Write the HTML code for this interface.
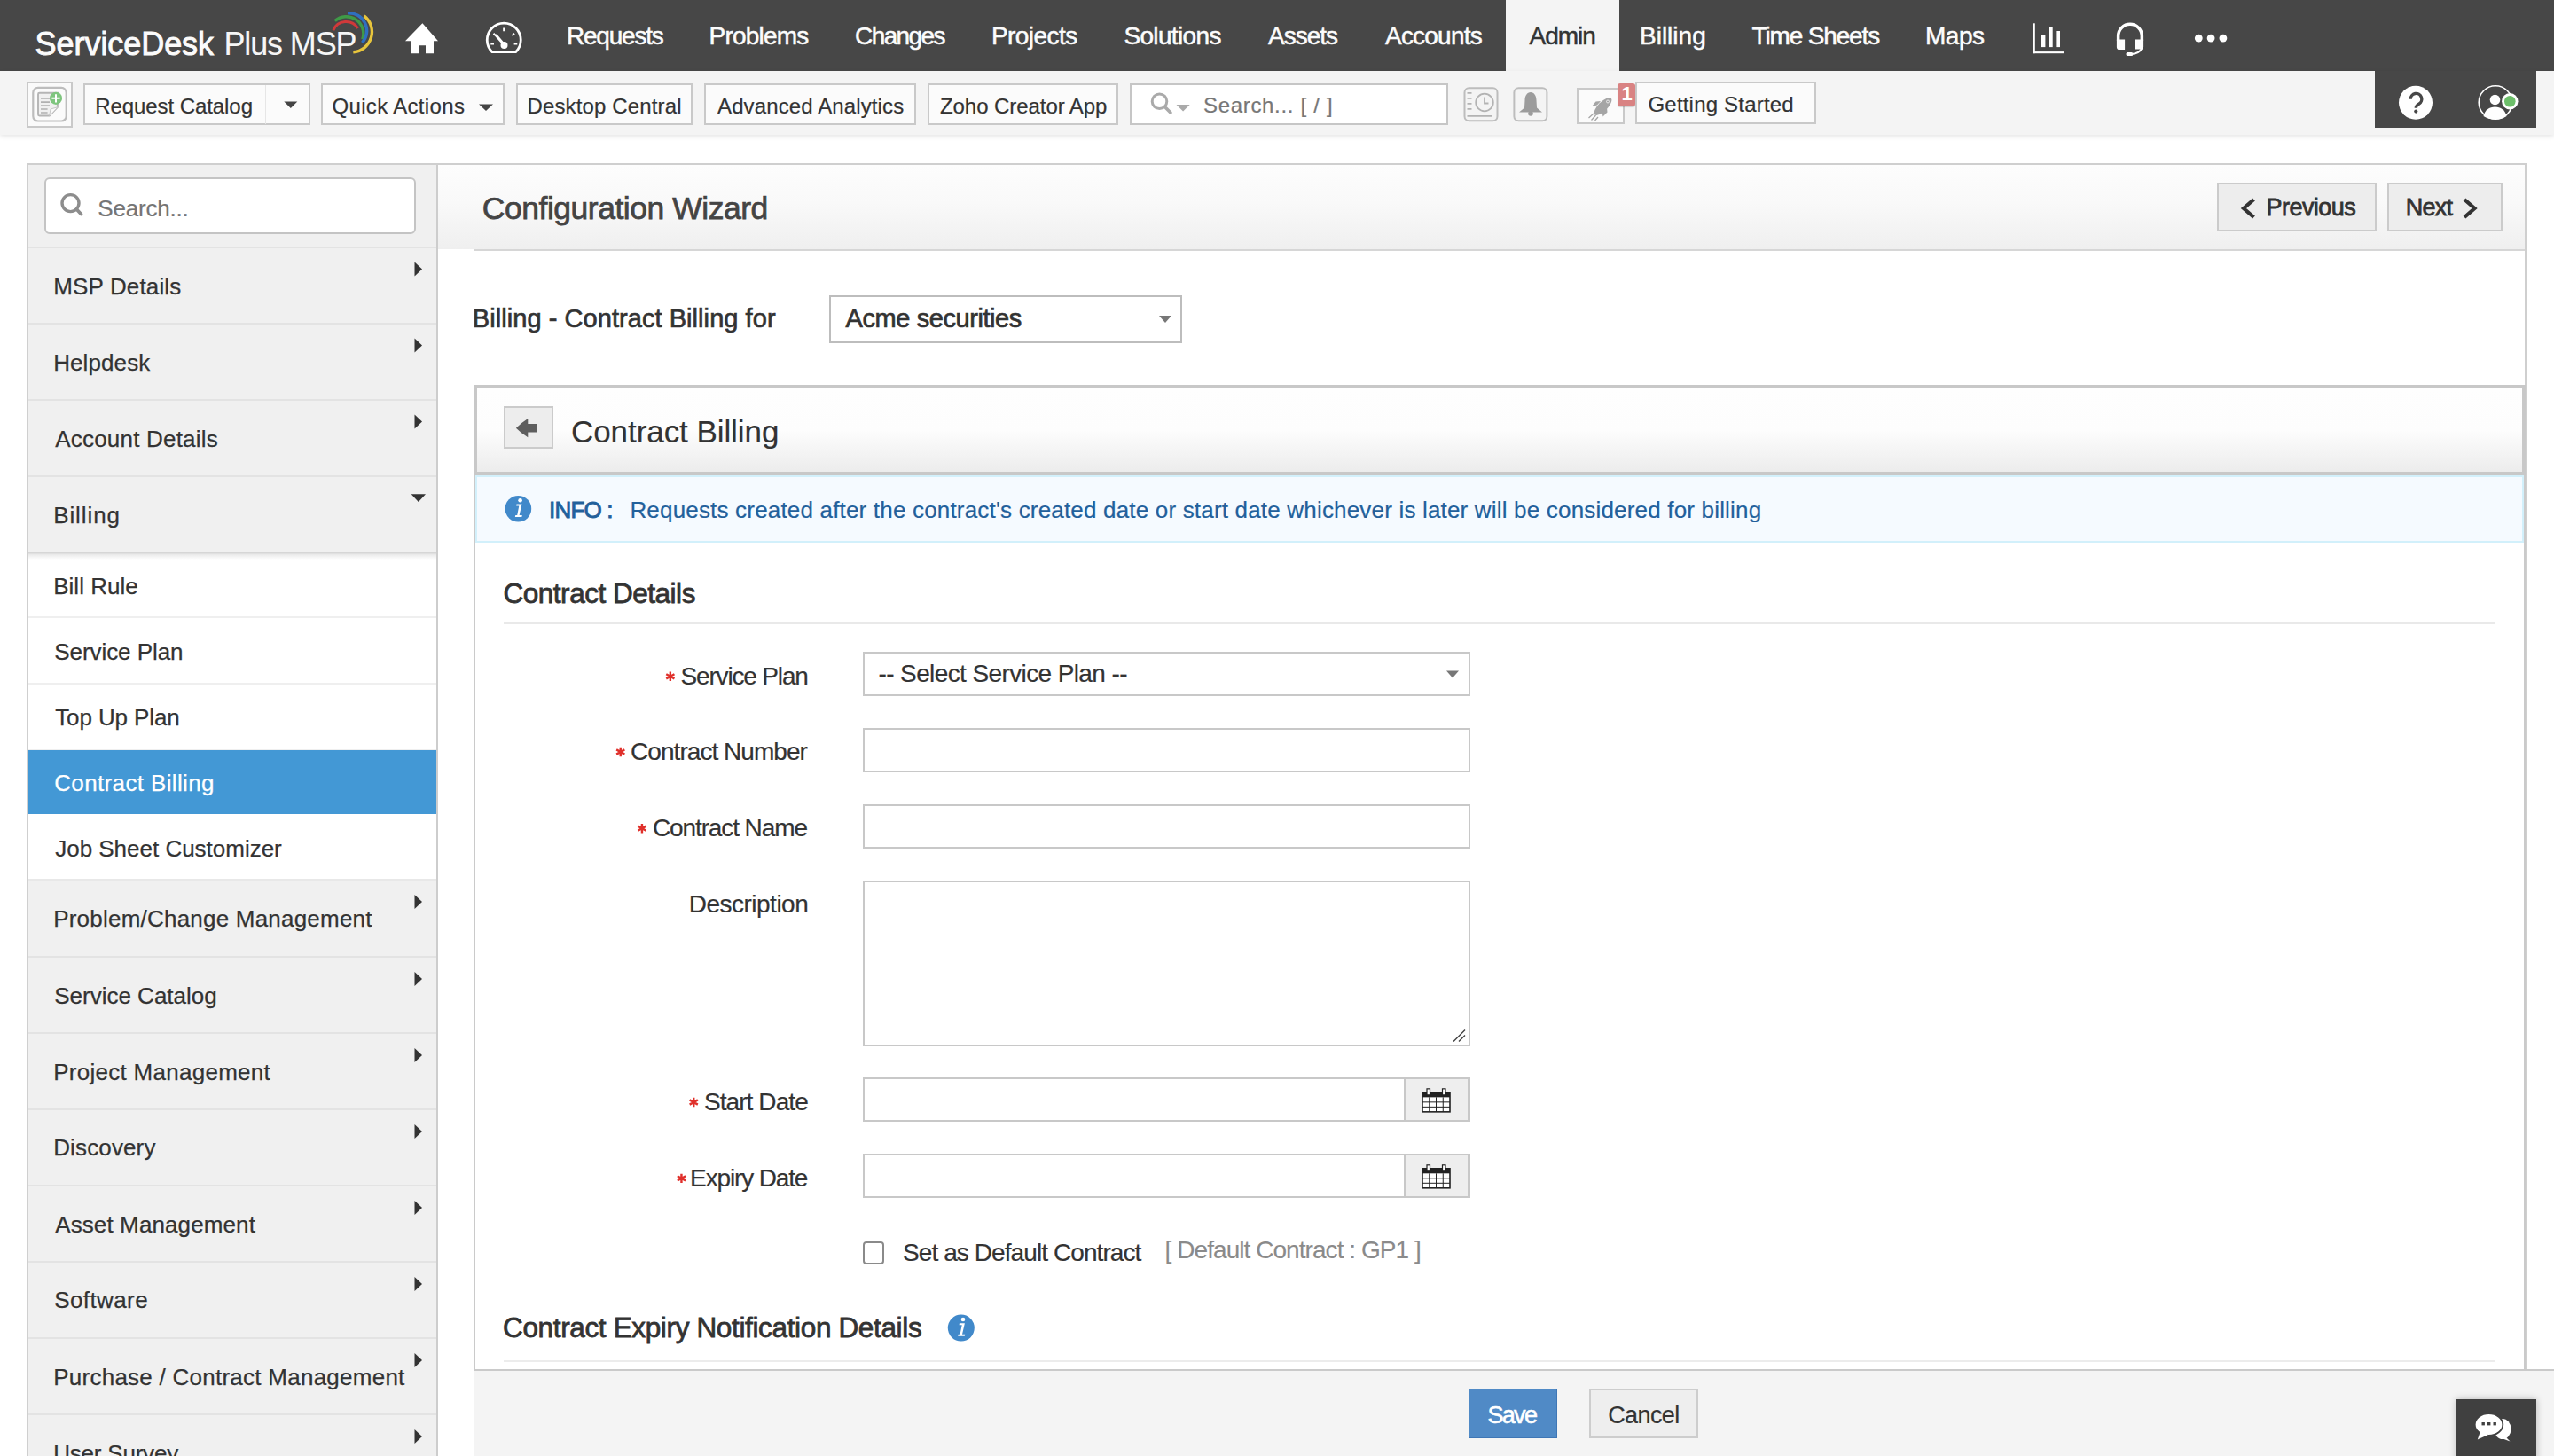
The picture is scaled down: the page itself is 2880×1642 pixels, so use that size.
<!DOCTYPE html>
<html><head><meta charset="utf-8"><title>ServiceDesk Plus MSP - Contract Billing</title>
<style>
html,body{margin:0;padding:0;}
body{width:2880px;height:1642px;position:relative;overflow:hidden;background:#fff;font-family:'Liberation Sans', sans-serif;}
.t{position:absolute;white-space:nowrap;}
svg{position:absolute;overflow:visible;}
</style></head><body>
<div style="position:absolute;left:0px;top:0px;width:2880px;height:80px;background:#474747"></div>
<div style="position:absolute;left:1698px;top:0px;width:128px;height:80px;background:#f4f4f4"></div>
<svg style="left:0;top:0" width="2880" height="80" viewBox="0 0 2880 80">
<g fill="none" stroke-width="3.2" stroke-linecap="butt">
<path d="M375.8,34.1 A15.56,15.56 0 0 1 403.5,32" stroke="#d0393a" stroke-width="3"/>
<path d="M377.6,23.6 A19.36,19.36 0 0 1 408.8,44.3" stroke="#3f9a47" stroke-width="3.4"/>
<path d="M392,14.8 A19.97,19.97 0 0 1 408.4,48.2" stroke="#2f6fc0" stroke-width="3.4"/>
<path d="M410.6,17.9 A22.9,22.9 0 0 1 398.3,58.8" stroke="#e8c53c" stroke-width="3.4"/>
</g>
<g fill="#fff">
<path d="M476.4,26.2 L494,46.2 L489,46.2 L489,60.3 L480,60.3 L480,51.3 L472,51.3 L472,60.3 L463,60.3 L463,46.2 L457,46.2 Z"/>
</g>
<g fill="none" stroke="#fff">
<path d="M555,58.7 A19,19 0 1 1 581.5,58.7 Z" stroke-width="2.8" stroke-linejoin="round"/>
<path d="M568.2,31.5 V35.2 M553.3,49.5 H557 M579.6,49.5 H583.3 M556.5,37.8 L559,40.3 M580,37.8 L577.5,40.3" stroke-width="2"/>
<path d="M559.5,40 L568.5,50.5" stroke-width="3" stroke-linecap="round"/>
</g>
<circle cx="568.5" cy="51" r="4" fill="#fff"/>
<!-- bar chart -->
<g fill="#fff">
<rect x="2292.6" y="26.3" width="2.2" height="33.9"/>
<rect x="2292.6" y="58.1" width="35.1" height="2.1"/>
<rect x="2301.9" y="39.3" width="4.5" height="13.8"/>
<rect x="2310.2" y="30.6" width="4.5" height="22.5"/>
<rect x="2318.4" y="35" width="4.6" height="18.1"/>
</g>
<!-- headset -->
<path d="M2388.65,46 V40.6 A13.35,13.35 0 0 1 2415.35,40.6 V46" fill="none" stroke="#fff" stroke-width="3.5"/>
<path d="M2386.9,44.5 H2396.1 V56 H2390 A3.1,3.1 0 0 1 2386.9,52.9 Z" fill="#fff"/>
<path d="M2408,44.5 H2417.1 V52.4 A3.1,3.1 0 0 1 2414,55.5 H2408 Z" fill="#fff"/>
<path d="M2415.5,54 Q2412.5,60.3 2404,61" fill="none" stroke="#fff" stroke-width="1.9"/>
<rect x="2397.6" y="59" width="7.6" height="4" rx="1.6" fill="#fff"/>
<!-- dots -->
<g fill="#fff"><circle cx="2479.3" cy="43.1" r="4.4"/><circle cx="2493.1" cy="43.1" r="4.4"/><circle cx="2506.9" cy="43.1" r="4.4"/></g>
</svg>
<div style="position:absolute;left:0px;top:80px;width:2880px;height:72px;background:#f4f4f4;box-shadow:0 2px 5px rgba(0,0,0,0.10)"></div>
<div style="position:absolute;left:2678px;top:80px;width:182px;height:63.599999999999994px;background:#474747"></div>
<div style="position:absolute;left:30.4px;top:92.3px;width:51.199999999999996px;height:51.500000000000014px;box-sizing:border-box;border:2px solid #c9c9c9;background:#fafafa"></div>
<svg style="left:0;top:0" width="2880" height="160" viewBox="0 0 2880 160">
<defs><filter id="bl" x="-20%" y="-20%" width="140%" height="140%"><feGaussianBlur stdDeviation="0.7"/></filter></defs>
<rect x="37.3" y="98.9" width="37.4" height="37.6" rx="5.5" fill="#fbfbfb" stroke="#bdbdbd" stroke-width="2.2" filter="url(#bl)"/>
<path d="M44.5,104.8 H64.9 V120.8 L55.7,130.5 H44.5 Q43,130.5 43,129 V106.3 Q43,104.8 44.5,104.8 Z" fill="#f0f0f0" stroke="#b5b5b5" stroke-width="1.9"/>
<path d="M55.7,130.5 L57,123 L64.9,120.8" fill="#fafafa" stroke="#c8c8c8" stroke-width="1"/>
<g stroke="#b0b0b0" stroke-width="1.6"><path d="M46,111 H56 M46,115.1 H56 M46,119.1 H56 M46,123 H53.6 M46,127 H53.6"/></g>
<circle cx="63" cy="110.8" r="7.1" fill="#7ec57e"/>
<path d="M63,106.2 V115.4 M58.4,110.8 H67.6" stroke="#fff" stroke-width="2"/>
<!-- history -->
<rect x="1651.5" y="99.3" width="37" height="37" rx="5" fill="none" stroke="#bdbdbd" stroke-width="2" filter="url(#bl)"/>
<circle cx="1674" cy="115.5" r="9.8" fill="none" stroke="#b3b3b3" stroke-width="1.8"/>
<path d="M1674,109.5 V116.5 H1678.5" fill="none" stroke="#b3b3b3" stroke-width="1.8"/>
<path d="M1654.5,104.8 H1659.5 M1654.5,110.8 H1659.5 M1654.5,116.8 H1659.5 M1654.5,122.8 H1659.5 M1654.5,130.8 H1682" stroke="#b3b3b3" stroke-width="1.8"/>
<!-- bell -->
<rect x="1707.4" y="99.3" width="37" height="37" rx="5" fill="none" stroke="#bdbdbd" stroke-width="2" filter="url(#bl)"/>
<path d="M1726,104 C1730,104 1732.5,108 1732.5,113 L1733,121.5 L1739,126.5 H1713 L1719,121.5 L1719.5,113 C1719.5,108 1722,104 1726,104 Z" fill="#9c9c9c"/>
<circle cx="1726" cy="128" r="2.8" fill="#9c9c9c"/>
</svg>
<div style="position:absolute;left:94.3px;top:94.3px;width:255.3px;height:47.2px;box-sizing:border-box;border:2px solid #c9c9c9;background:#fbfbfb"></div>
<div style="position:absolute;left:298.6px;top:96px;width:1.3999999999999773px;height:44px;background:#e6e6e6"></div>
<div style="position:absolute;left:362px;top:94.3px;width:207px;height:47.2px;box-sizing:border-box;border:2px solid #c9c9c9;background:#fbfbfb"></div>
<div style="position:absolute;left:582px;top:94.3px;width:199px;height:47.2px;box-sizing:border-box;border:2px solid #c9c9c9;background:#fbfbfb"></div>
<div style="position:absolute;left:794px;top:94.3px;width:239px;height:47.2px;box-sizing:border-box;border:2px solid #c9c9c9;background:#fbfbfb"></div>
<div style="position:absolute;left:1046px;top:94.3px;width:215px;height:47.2px;box-sizing:border-box;border:2px solid #c9c9c9;background:#fbfbfb"></div>
<div style="position:absolute;left:1274.3px;top:94.4px;width:359.0px;height:46.79999999999998px;box-sizing:border-box;border:2px solid #c6c6c6;background:#fff"></div>
<div style="position:absolute;left:1778px;top:98.5px;width:53.59999999999991px;height:41.099999999999994px;box-sizing:border-box;border:2px solid #c9c9c9;background:#fbfbfb"></div>
<div style="position:absolute;left:1844.4px;top:92.2px;width:203.39999999999986px;height:47.39999999999999px;box-sizing:border-box;border:2px solid #c9c9c9;background:#fbfbfb"></div>
<svg style="left:0;top:0" width="2880" height="160" viewBox="0 0 2880 160">
<!-- triangles -->
<path d="M320.3,114.4 H335.3 L327.8,122 Z" fill="#444"/>
<path d="M540,117.5 H556 L548,125 Z" fill="#444"/>
<!-- search mag -->
<circle cx="1307.5" cy="114.3" r="8.3" fill="none" stroke="#aaa" stroke-width="3"/>
<path d="M1313.5,120.5 L1320,127" stroke="#aaa" stroke-width="3.6" stroke-linecap="round"/>
<path d="M1326.5,118 H1341.7 L1334.1,125.6 Z" fill="#aaa"/>
</svg>
<div style="position:absolute;left:1824.2px;top:94.2px;width:19.700000000000045px;height:25.599999999999994px;background:#d98383;border-radius:3px;box-shadow:0 1px 1px rgba(0,0,0,0.15);z-index:3"></div>
<svg style="left:0;top:0;z-index:2" width="2880" height="160" viewBox="0 0 2880 160">
<ellipse cx="1807.5" cy="120" rx="13" ry="5.2" transform="rotate(-45 1807.5 120)" fill="#a5a5a5"/>
<path d="M1801,118.5 L1795,120 L1799.5,114.5 L1805,114 Z" fill="#a5a5a5"/>
<path d="M1806.5,126 L1807.5,131.5 L1812.5,126.5 L1812,121 Z" fill="#a5a5a5"/>
<path d="M1797,128 L1791.5,133 M1799.5,130 L1794.5,135.5 M1802,132 L1798.5,136" stroke="#a5a5a5" stroke-width="1.3"/>
<circle cx="1813" cy="114.5" r="1.5" fill="none" stroke="#f5f5f5" stroke-width="0.8"/>
</svg>
<svg style="left:0;top:0" width="2880" height="160" viewBox="0 0 2880 160">
<circle cx="2724" cy="115.8" r="19" fill="#fff"/>
<circle cx="2814" cy="115.5" r="18.8" fill="none" stroke="#fff" stroke-width="1.6"/>
<circle cx="2813.5" cy="112.5" r="5.8" fill="#fff"/>
<path d="M2800.5,131 C2802,124 2807,120.5 2813.5,120.5 C2820,120.5 2825,124 2826.5,131 C2823,133.5 2818.5,134.5 2813.5,134.5 C2808.5,134.5 2804,133.5 2800.5,131 Z" fill="#fff"/>
<circle cx="2830.3" cy="114.2" r="9.2" fill="#fff"/>
<circle cx="2830.3" cy="114.2" r="6.3" fill="#6dbf6a"/>
</svg>
<svg style="left:0;top:0;z-index:6" width="2880" height="160" viewBox="0 0 2880 160">
<path d="M2718.2,111.8 A6.3,6.3 0 1 1 2727.6,117.2 C2725.4,118.4 2724.3,119.3 2724.3,121.8" fill="none" stroke="#474747" stroke-width="3.4"/>
<circle cx="2724.3" cy="125.6" r="2.1" fill="#474747"/>
</svg>
<div style="position:absolute;left:30px;top:184px;width:2819px;height:1516px;box-sizing:border-box;border:2px solid #cfcfcf;background:#fff"></div>
<div style="position:absolute;left:32px;top:186px;width:462px;height:1514px;box-sizing:border-box;background:#f0f0f0;border-right:2px solid #cdcdcd"></div>
<div style="position:absolute;left:50.3px;top:200px;width:418.7px;height:63.60000000000002px;box-sizing:border-box;border:2px solid #c4c4c4;border-radius:6px;background:#fff"></div>
<svg style="left:0;top:0" width="600" height="300" viewBox="0 0 600 300">
<circle cx="79.5" cy="229.1" r="9.5" fill="none" stroke="#8d8d8d" stroke-width="3.4"/>
<path d="M86.5,236.3 L91.5,241.5" stroke="#8d8d8d" stroke-width="3.8" stroke-linecap="round"/>
</svg>
<div style="position:absolute;left:32px;top:278px;width:460px;height:2px;background:#e3e3e3"></div>
<div style="position:absolute;left:32px;top:364px;width:460px;height:2px;background:#e3e3e3"></div>
<div style="position:absolute;left:32px;top:450px;width:460px;height:2px;background:#e3e3e3"></div>
<div style="position:absolute;left:32px;top:536px;width:460px;height:2px;background:#e3e3e3"></div>
<div style="position:absolute;left:32px;top:622px;width:460px;height:370px;background:#fff"></div>
<div style="position:absolute;left:32px;top:622px;width:460px;height:9px;background:linear-gradient(rgba(0,0,0,0.22),rgba(0,0,0,0.08) 40%,rgba(0,0,0,0))"></div>
<div style="position:absolute;left:32px;top:846px;width:460px;height:71.5px;background:#4398d5"></div>
<div style="position:absolute;left:32px;top:695px;width:460px;height:2px;background:#efefef"></div>
<div style="position:absolute;left:32px;top:770px;width:460px;height:2px;background:#efefef"></div>
<div style="position:absolute;left:32px;top:845px;width:460px;height:1px;background:#efefef"></div>
<div style="position:absolute;left:32px;top:991px;width:460px;height:2px;background:#e8e8e8"></div>
<div style="position:absolute;left:32px;top:1078px;width:460px;height:2px;background:#e3e3e3"></div>
<div style="position:absolute;left:32px;top:1164px;width:460px;height:2px;background:#e3e3e3"></div>
<div style="position:absolute;left:32px;top:1250px;width:460px;height:2px;background:#e3e3e3"></div>
<div style="position:absolute;left:32px;top:1336px;width:460px;height:2px;background:#e3e3e3"></div>
<div style="position:absolute;left:32px;top:1422px;width:460px;height:2px;background:#e3e3e3"></div>
<div style="position:absolute;left:32px;top:1508px;width:460px;height:2px;background:#e3e3e3"></div>
<div style="position:absolute;left:32px;top:1594px;width:460px;height:2px;background:#e3e3e3"></div>
<div style="position:absolute;left:32px;top:1680px;width:460px;height:2px;background:#e3e3e3"></div>
<svg style="left:0;top:0;z-index:4" width="600" height="1700" viewBox="0 0 600 1700"><g fill="#333"><path d="M467.5,295.5 L476,303.5 L467.5,311.5 Z"/><path d="M467.5,381.5 L476,389.5 L467.5,397.5 Z"/><path d="M467.5,467.5 L476,475.5 L467.5,483.5 Z"/><path d="M463.7,557.3 H480 L471.85,565.9 Z"/><path d="M467.5,1009 L476,1017 L467.5,1025 Z"/><path d="M467.5,1096 L476,1104 L467.5,1112 Z"/><path d="M467.5,1182 L476,1190 L467.5,1198 Z"/><path d="M467.5,1268 L476,1276 L467.5,1284 Z"/><path d="M467.5,1354 L476,1362 L467.5,1370 Z"/><path d="M467.5,1440 L476,1448 L467.5,1456 Z"/><path d="M467.5,1526 L476,1534 L467.5,1542 Z"/><path d="M467.5,1612 L476,1620 L467.5,1628 Z"/></g></svg>
<div style="position:absolute;left:494px;top:186px;width:2353px;height:95px;background:linear-gradient(#fdfdfd 0%,#f9f9f9 45%,#efefef 100%)"></div>
<div style="position:absolute;left:534px;top:281px;width:2313px;height:2px;background:#d6d6d6"></div>
<div style="position:absolute;left:2500px;top:206px;width:179.5999999999999px;height:55.30000000000001px;box-sizing:border-box;border:2px solid #cbcbcb;background:#ededed"></div>
<div style="position:absolute;left:2692px;top:206px;width:129.5999999999999px;height:55.30000000000001px;box-sizing:border-box;border:2px solid #cbcbcb;background:#ededed"></div>
<svg style="left:0;top:0;z-index:4" width="2880" height="300" viewBox="0 0 2880 300">
<path d="M2541.5,225 L2530,235 L2541.5,245" fill="none" stroke="#333" stroke-width="4.2"/>
<path d="M2779,225 L2790.5,235 L2779,245" fill="none" stroke="#333" stroke-width="4.2"/>
</svg>
<div style="position:absolute;left:934.6px;top:332.8px;width:398.4px;height:54.39999999999998px;box-sizing:border-box;border:2px solid #bdbdbd;background:#fff"></div>
<svg style="left:0;top:0;z-index:4" width="2880" height="400" viewBox="0 0 2880 400">
<path d="M1307,356 H1321 L1314,364 Z" fill="#777"/>
</svg>
<div style="position:absolute;left:534px;top:434px;width:2314px;height:1112px;box-sizing:border-box;border:2px solid #cacaca;background:#fff"></div>
<div style="position:absolute;left:534px;top:434px;width:2314px;height:102px;box-sizing:border-box;border:4px solid #c8c8c8;background:linear-gradient(#fefefe 0%,#fdfdfd 50%,#ececec 100%)"></div>
<div style="position:absolute;left:568.2px;top:458.2px;width:55.59999999999991px;height:47.60000000000002px;box-sizing:border-box;border:2px solid #cbcbcb;background:#ededed"></div>
<svg style="left:0;top:0;z-index:4" width="2880" height="600" viewBox="0 0 2880 600">
<path d="M581.9,482.8 Q588,476.5 595.3,471.9 L595.3,478.1 L605.8,478.1 L605.8,487.5 L595.3,487.5 L595.3,493.3 Q588,489 581.9,482.8 Z" fill="#5e5e5e"/>
</svg>
<div style="position:absolute;left:536px;top:536px;width:2310px;height:75.5px;box-sizing:border-box;border:2px solid #d2f0fb;background:#f5faff"></div>
<svg style="left:0;top:0;z-index:4" width="2880" height="1600" viewBox="0 0 2880 1600">
<circle cx="584.4" cy="573.8" r="14.8" fill="#4189ca"/>
<circle cx="586.6" cy="564.3" r="2.3" fill="#fff"/>
<path d="M582.5,568.5 H588.5 L585.6,581 H588.8 L588.4,583 H580.8 L581.3,581 H583.2 L585.3,570.5 H582.2 Z" fill="#fff"/>
<circle cx="1083.8" cy="1497.6" r="15" fill="#4189ca"/>
<circle cx="1086" cy="1488" r="2.3" fill="#fff"/>
<path d="M1081.9,1492.3 H1087.9 L1085,1504.8 H1088.2 L1087.8,1506.8 H1080.2 L1080.7,1504.8 H1082.6 L1084.7,1494.3 H1081.6 Z" fill="#fff"/>
</svg>
<div style="position:absolute;left:568px;top:702px;width:2245.5px;height:2px;background:#e9e9e9"></div>
<div style="position:absolute;left:972.5px;top:734.5px;width:685.0px;height:50.89999999999998px;box-sizing:border-box;border:2px solid #c8c8c8;background:#fff"></div>
<div style="position:absolute;left:972.5px;top:820.5px;width:685.0px;height:50.60000000000002px;box-sizing:border-box;border:2px solid #c8c8c8;background:#fff"></div>
<div style="position:absolute;left:972.5px;top:906.7px;width:685.0px;height:50.59999999999991px;box-sizing:border-box;border:2px solid #c8c8c8;background:#fff"></div>
<div style="position:absolute;left:972.5px;top:993px;width:685.0px;height:186.5999999999999px;box-sizing:border-box;border:2px solid #c8c8c8;background:#fff"></div>
<div style="position:absolute;left:972.5px;top:1214.7px;width:685.0px;height:50.299999999999955px;box-sizing:border-box;border:2px solid #c8c8c8;background:#fff"></div>
<div style="position:absolute;left:972.5px;top:1300.6px;width:685.0px;height:50.40000000000009px;box-sizing:border-box;border:2px solid #c8c8c8;background:#fff"></div>
<div style="position:absolute;left:1582.7px;top:1214.7px;width:74.79999999999995px;height:50.299999999999955px;box-sizing:border-box;border:2px solid #c8c8c8;background:#eeeeee"></div>
<div style="position:absolute;left:1582.7px;top:1300.6px;width:74.79999999999995px;height:50.40000000000009px;box-sizing:border-box;border:2px solid #c8c8c8;background:#eeeeee"></div>
<svg style="left:0;top:0;z-index:4" width="2880" height="1600" viewBox="0 0 2880 1600"><g stroke="#e0302b" stroke-width="2.4" stroke-linecap="butt"><path d="M755.8499999999999,757.5999999999999 V768.0 M751.2499999999999,760.1999999999999 L760.4499999999999,765.4 M751.2499999999999,765.4 L760.4499999999999,760.1999999999999"/></g><g stroke="#e0302b" stroke-width="2.4" stroke-linecap="butt"><path d="M699.75,842.8 V853.2 M695.15,845.4 L704.35,850.6 M695.15,850.6 L704.35,845.4"/></g><g stroke="#e0302b" stroke-width="2.4" stroke-linecap="butt"><path d="M723.95,928.9999999999999 V939.4 M719.35,931.5999999999999 L728.5500000000001,936.8 M719.35,936.8 L728.5500000000001,931.5999999999999"/></g><g stroke="#e0302b" stroke-width="2.4" stroke-linecap="butt"><path d="M782.25,1237.8 V1248.2 M777.65,1240.4 L786.85,1245.6 M777.65,1245.6 L786.85,1240.4"/></g><g stroke="#e0302b" stroke-width="2.4" stroke-linecap="butt"><path d="M768.45,1323.7 V1334.1000000000001 M763.85,1326.3000000000002 L773.0500000000001,1331.5 M763.85,1331.5 L773.0500000000001,1326.3000000000002"/></g><path d="M1631,756.5 H1645 L1638,764.5 Z" fill="#777"/><path d="M1639,1174.5 L1652,1161.5 M1645,1174.5 L1652,1167.5" stroke="#444" stroke-width="1.4"/><rect x="1604" y="1231.85" width="31" height="22" fill="#fff" stroke="#222" stroke-width="1.6"/><rect x="1604" y="1231.85" width="31" height="5.5" fill="#222"/><path d="M1611.75,1237.35 V1253.85" stroke="#222" stroke-width="1"/><path d="M1619.5,1237.35 V1253.85" stroke="#222" stroke-width="1"/><path d="M1627.25,1237.35 V1253.85" stroke="#222" stroke-width="1"/><path d="M1604,1242.85 H1635" stroke="#222" stroke-width="1"/><path d="M1604,1248.35 H1635" stroke="#222" stroke-width="1"/><rect x="1609" y="1227.85" width="3.5" height="7" fill="#fff" stroke="#222" stroke-width="1.2"/><rect x="1626.5" y="1227.85" width="3.5" height="7" fill="#fff" stroke="#222" stroke-width="1.2"/><rect x="1604" y="1317.8" width="31" height="22" fill="#fff" stroke="#222" stroke-width="1.6"/><rect x="1604" y="1317.8" width="31" height="5.5" fill="#222"/><path d="M1611.75,1323.3 V1339.8" stroke="#222" stroke-width="1"/><path d="M1619.5,1323.3 V1339.8" stroke="#222" stroke-width="1"/><path d="M1627.25,1323.3 V1339.8" stroke="#222" stroke-width="1"/><path d="M1604,1328.8 H1635" stroke="#222" stroke-width="1"/><path d="M1604,1334.3 H1635" stroke="#222" stroke-width="1"/><rect x="1609" y="1313.8" width="3.5" height="7" fill="#fff" stroke="#222" stroke-width="1.2"/><rect x="1626.5" y="1313.8" width="3.5" height="7" fill="#fff" stroke="#222" stroke-width="1.2"/></svg>
<div style="position:absolute;left:972.8px;top:1400.4px;width:24.5px;height:25.399999999999864px;box-sizing:border-box;border:2px solid #8a8a8a;border-radius:4px;background:#fff"></div>
<div style="position:absolute;left:568px;top:1534px;width:2245.5px;height:2px;background:#ececec"></div>
<div style="position:absolute;left:534px;top:1546px;width:2346px;height:96px;background:#f4f4f4"></div>
<div style="position:absolute;left:534px;top:1544px;width:2346px;height:2px;background:#cacaca"></div>
<div style="position:absolute;left:1655.8px;top:1566px;width:100.20000000000005px;height:55.700000000000045px;box-sizing:border-box;border:1.5px solid #3e76b5;background:#508ac6"></div>
<div style="position:absolute;left:1792px;top:1566px;width:123.40000000000009px;height:55.700000000000045px;box-sizing:border-box;border:2px solid #cdcdcd;background:#eeeeee"></div>
<div style="position:absolute;left:2770px;top:1577.7px;width:90px;height:82.29999999999995px;background:#404040;box-shadow:0 0 8px rgba(0,0,0,0.25)"></div>
<svg style="left:0;top:0;z-index:4" width="2880" height="1642" viewBox="0 0 2880 1642">
<ellipse cx="2822" cy="1611.5" rx="9.5" ry="11.5" fill="#fff"/>
<path d="M2824,1619 L2830.5,1625.5 L2818,1621 Z" fill="#fff"/>
<ellipse cx="2806.5" cy="1606.5" rx="15.8" ry="12.4" fill="#fff" stroke="#404040" stroke-width="1.8"/>
<path d="M2797,1614 L2793.8,1623.4 L2806,1618 Z" fill="#fff"/>
<rect x="2798.5" y="1604" width="3.4" height="3.4" fill="#404040"/><rect x="2805" y="1604" width="3.4" height="3.4" fill="#404040"/><rect x="2811.5" y="1604" width="3.4" height="3.4" fill="#404040"/>
</svg>
<div class="t" style="left:39.60px;top:31.60px;line-height:36px;z-index:5;font-family:'Liberation Sans', sans-serif;font-size:36px;font-weight:400;color:#fbfbfb;letter-spacing:-0.060px;-webkit-text-stroke:0.9px #fbfbfb;">ServiceDesk</div>
<div class="t" style="left:252.50px;top:31.60px;line-height:36px;z-index:5;font-family:'Liberation Sans', sans-serif;font-size:36px;font-weight:400;color:#f6f6f6;letter-spacing:-1.143px;-webkit-text-stroke:0.1px #f6f6f6;">Plus MSP</div>
<div class="t" style="left:639.00px;top:26.60px;line-height:28px;z-index:5;font-family:'Liberation Sans', sans-serif;font-size:28px;font-weight:400;color:#fcfcfc;letter-spacing:-1.214px;-webkit-text-stroke:0.5px #fcfcfc;">Requests</div>
<div class="t" style="left:799.50px;top:26.60px;line-height:28px;z-index:5;font-family:'Liberation Sans', sans-serif;font-size:28px;font-weight:400;color:#fcfcfc;letter-spacing:-0.786px;-webkit-text-stroke:0.5px #fcfcfc;">Problems</div>
<div class="t" style="left:964.00px;top:26.60px;line-height:28px;z-index:5;font-family:'Liberation Sans', sans-serif;font-size:28px;font-weight:400;color:#fcfcfc;letter-spacing:-1.583px;-webkit-text-stroke:0.5px #fcfcfc;">Changes</div>
<div class="t" style="left:1118.00px;top:26.60px;line-height:28px;z-index:5;font-family:'Liberation Sans', sans-serif;font-size:28px;font-weight:400;color:#fcfcfc;letter-spacing:-0.571px;-webkit-text-stroke:0.5px #fcfcfc;">Projects</div>
<div class="t" style="left:1267.40px;top:26.60px;line-height:28px;z-index:5;font-family:'Liberation Sans', sans-serif;font-size:28px;font-weight:400;color:#fcfcfc;letter-spacing:-0.650px;-webkit-text-stroke:0.5px #fcfcfc;">Solutions</div>
<div class="t" style="left:1430.00px;top:26.60px;line-height:28px;z-index:5;font-family:'Liberation Sans', sans-serif;font-size:28px;font-weight:400;color:#fcfcfc;letter-spacing:-1.000px;-webkit-text-stroke:0.5px #fcfcfc;">Assets</div>
<div class="t" style="left:1562.00px;top:26.60px;line-height:28px;z-index:5;font-family:'Liberation Sans', sans-serif;font-size:28px;font-weight:400;color:#fcfcfc;letter-spacing:-0.786px;-webkit-text-stroke:0.5px #fcfcfc;">Accounts</div>
<div class="t" style="left:1724.50px;top:26.60px;line-height:28px;z-index:5;font-family:'Liberation Sans', sans-serif;font-size:28px;font-weight:400;color:#333;letter-spacing:-1.000px;-webkit-text-stroke:0.5px #333;">Admin</div>
<div class="t" style="left:1849.00px;top:26.60px;line-height:28px;z-index:5;font-family:'Liberation Sans', sans-serif;font-size:28px;font-weight:400;color:#fcfcfc;letter-spacing:0.000px;-webkit-text-stroke:0.5px #fcfcfc;">Billing</div>
<div class="t" style="left:1975.50px;top:26.60px;line-height:28px;z-index:5;font-family:'Liberation Sans', sans-serif;font-size:28px;font-weight:400;color:#fcfcfc;letter-spacing:-1.150px;-webkit-text-stroke:0.5px #fcfcfc;">Time Sheets</div>
<div class="t" style="left:2171.00px;top:26.60px;line-height:28px;z-index:5;font-family:'Liberation Sans', sans-serif;font-size:28px;font-weight:400;color:#fcfcfc;letter-spacing:-0.500px;-webkit-text-stroke:0.5px #fcfcfc;">Maps</div>
<div class="t" style="left:1828.50px;top:95.30px;line-height:22px;z-index:6;font-family:'Liberation Sans', sans-serif;font-size:22px;font-weight:700;color:#fff;letter-spacing:0.000px;">1</div>
<div class="t" style="left:107.20px;top:107.50px;line-height:24px;z-index:5;font-family:'Liberation Sans', sans-serif;font-size:24px;font-weight:400;color:#333;letter-spacing:-0.071px;-webkit-text-stroke:0.2px #333;">Request Catalog</div>
<div class="t" style="left:374.50px;top:107.50px;line-height:24px;z-index:5;font-family:'Liberation Sans', sans-serif;font-size:24px;font-weight:400;color:#333;letter-spacing:0.333px;-webkit-text-stroke:0.2px #333;">Quick Actions</div>
<div class="t" style="left:594.50px;top:107.50px;line-height:24px;z-index:5;font-family:'Liberation Sans', sans-serif;font-size:24px;font-weight:400;color:#333;letter-spacing:0.143px;-webkit-text-stroke:0.2px #333;">Desktop Central</div>
<div class="t" style="left:809.00px;top:107.50px;line-height:24px;z-index:5;font-family:'Liberation Sans', sans-serif;font-size:24px;font-weight:400;color:#333;letter-spacing:0.118px;-webkit-text-stroke:0.2px #333;">Advanced Analytics</div>
<div class="t" style="left:1060.00px;top:107.50px;line-height:24px;z-index:5;font-family:'Liberation Sans', sans-serif;font-size:24px;font-weight:400;color:#333;letter-spacing:-0.067px;-webkit-text-stroke:0.2px #333;">Zoho Creator App</div>
<div class="t" style="left:1357.00px;top:107.10px;line-height:24px;z-index:5;font-family:'Liberation Sans', sans-serif;font-size:24px;font-weight:400;color:#777;letter-spacing:0.679px;-webkit-text-stroke:0.2px #777;">Search... [ / ]</div>
<div class="t" style="left:1858.50px;top:105.60px;line-height:24px;z-index:5;font-family:'Liberation Sans', sans-serif;font-size:24px;font-weight:400;color:#333;letter-spacing:0.193px;-webkit-text-stroke:0.2px #333;">Getting Started</div>
<div class="t" style="left:110.30px;top:221.90px;line-height:26px;z-index:5;font-family:'Liberation Sans', sans-serif;font-size:26px;font-weight:400;color:#757575;letter-spacing:-0.188px;-webkit-text-stroke:0.2px #757575;">Search...</div>
<div class="t" style="left:60.20px;top:309.90px;line-height:26px;z-index:5;font-family:'Liberation Sans', sans-serif;font-size:26px;font-weight:400;color:#333;letter-spacing:0.150px;-webkit-text-stroke:0.25px #333;">MSP Details</div>
<div class="t" style="left:60.20px;top:395.90px;line-height:26px;z-index:5;font-family:'Liberation Sans', sans-serif;font-size:26px;font-weight:400;color:#333;letter-spacing:0.100px;-webkit-text-stroke:0.25px #333;">Helpdesk</div>
<div class="t" style="left:62.20px;top:481.90px;line-height:26px;z-index:5;font-family:'Liberation Sans', sans-serif;font-size:26px;font-weight:400;color:#333;letter-spacing:0.207px;-webkit-text-stroke:0.25px #333;">Account Details</div>
<div class="t" style="left:60.20px;top:567.90px;line-height:26px;z-index:5;font-family:'Liberation Sans', sans-serif;font-size:26px;font-weight:400;color:#333;letter-spacing:0.900px;-webkit-text-stroke:0.25px #333;">Billing</div>
<div class="t" style="left:60.20px;top:648.00px;line-height:26px;z-index:5;font-family:'Liberation Sans', sans-serif;font-size:26px;font-weight:400;color:#333;letter-spacing:0.025px;-webkit-text-stroke:0.25px #333;">Bill Rule</div>
<div class="t" style="left:61.20px;top:722.20px;line-height:26px;z-index:5;font-family:'Liberation Sans', sans-serif;font-size:26px;font-weight:400;color:#333;letter-spacing:-0.055px;-webkit-text-stroke:0.25px #333;">Service Plan</div>
<div class="t" style="left:62.20px;top:795.90px;line-height:26px;z-index:5;font-family:'Liberation Sans', sans-serif;font-size:26px;font-weight:400;color:#333;letter-spacing:-0.110px;-webkit-text-stroke:0.25px #333;">Top Up Plan</div>
<div class="t" style="left:61.20px;top:870.10px;line-height:26px;z-index:5;font-family:'Liberation Sans', sans-serif;font-size:26px;font-weight:400;color:#fff;letter-spacing:0.367px;-webkit-text-stroke:0.25px #fff;">Contract Billing</div>
<div class="t" style="left:62.20px;top:944.30px;line-height:26px;z-index:5;font-family:'Liberation Sans', sans-serif;font-size:26px;font-weight:400;color:#333;letter-spacing:-0.011px;-webkit-text-stroke:0.25px #333;">Job Sheet Customizer</div>
<div class="t" style="left:60.20px;top:1023.30px;line-height:26px;z-index:5;font-family:'Liberation Sans', sans-serif;font-size:26px;font-weight:400;color:#333;letter-spacing:0.217px;-webkit-text-stroke:0.25px #333;">Problem/Change Management</div>
<div class="t" style="left:61.20px;top:1109.70px;line-height:26px;z-index:5;font-family:'Liberation Sans', sans-serif;font-size:26px;font-weight:400;color:#333;letter-spacing:0.000px;-webkit-text-stroke:0.25px #333;">Service Catalog</div>
<div class="t" style="left:60.20px;top:1195.70px;line-height:26px;z-index:5;font-family:'Liberation Sans', sans-serif;font-size:26px;font-weight:400;color:#333;letter-spacing:0.276px;-webkit-text-stroke:0.25px #333;">Project Management</div>
<div class="t" style="left:60.20px;top:1281.20px;line-height:26px;z-index:5;font-family:'Liberation Sans', sans-serif;font-size:26px;font-weight:400;color:#333;letter-spacing:0.137px;-webkit-text-stroke:0.25px #333;">Discovery</div>
<div class="t" style="left:62.20px;top:1367.60px;line-height:26px;z-index:5;font-family:'Liberation Sans', sans-serif;font-size:26px;font-weight:400;color:#333;letter-spacing:0.113px;-webkit-text-stroke:0.25px #333;">Asset Management</div>
<div class="t" style="left:61.20px;top:1453.20px;line-height:26px;z-index:5;font-family:'Liberation Sans', sans-serif;font-size:26px;font-weight:400;color:#333;letter-spacing:0.400px;-webkit-text-stroke:0.25px #333;">Software</div>
<div class="t" style="left:60.20px;top:1539.60px;line-height:26px;z-index:5;font-family:'Liberation Sans', sans-serif;font-size:26px;font-weight:400;color:#333;letter-spacing:0.255px;-webkit-text-stroke:0.25px #333;">Purchase / Contract Management</div>
<div class="t" style="left:60.20px;top:1625.60px;line-height:26px;z-index:5;font-family:'Liberation Sans', sans-serif;font-size:26px;font-weight:400;color:#333;letter-spacing:-0.210px;-webkit-text-stroke:0.25px #333;">User Survey</div>
<div class="t" style="left:543.80px;top:217.82px;line-height:35.5px;z-index:5;font-family:'Liberation Sans', sans-serif;font-size:35.5px;font-weight:400;color:#444;letter-spacing:-0.474px;-webkit-text-stroke:0.75px #444;">Configuration Wizard</div>
<div class="t" style="left:2555.60px;top:221.05px;line-height:27px;z-index:5;font-family:'Liberation Sans', sans-serif;font-size:27px;font-weight:400;color:#333;letter-spacing:-0.571px;-webkit-text-stroke:0.8px #333;">Previous</div>
<div class="t" style="left:2712.80px;top:221.05px;line-height:27px;z-index:5;font-family:'Liberation Sans', sans-serif;font-size:27px;font-weight:400;color:#333;letter-spacing:-0.800px;-webkit-text-stroke:0.8px #333;">Next</div>
<div class="t" style="left:532.80px;top:345.35px;line-height:29px;z-index:5;font-family:'Liberation Sans', sans-serif;font-size:29px;font-weight:400;color:#333;letter-spacing:0.059px;-webkit-text-stroke:0.7px #333;">Billing - Contract Billing for</div>
<div class="t" style="left:953.60px;top:345.35px;line-height:29px;z-index:5;font-family:'Liberation Sans', sans-serif;font-size:29px;font-weight:400;color:#333;letter-spacing:-0.429px;-webkit-text-stroke:0.7px #333;">Acme securities</div>
<div class="t" style="left:644.00px;top:468.75px;line-height:35px;z-index:5;font-family:'Liberation Sans', sans-serif;font-size:35px;font-weight:400;color:#333;letter-spacing:-0.067px;-webkit-text-stroke:0.15px #333;">Contract Billing</div>
<div class="t" style="left:619.10px;top:561.70px;line-height:26px;z-index:5;font-family:'Liberation Sans', sans-serif;font-size:26px;font-weight:400;color:#22609b;letter-spacing:-0.840px;-webkit-text-stroke:0.9px #22609b;">INFO :</div>
<div class="t" style="left:710.40px;top:561.70px;line-height:26px;z-index:5;font-family:'Liberation Sans', sans-serif;font-size:26px;font-weight:400;color:#22609b;letter-spacing:0.183px;-webkit-text-stroke:0.2px #22609b;">Requests created after the contract's created date or start date whichever is later will be considered for billing</div>
<div class="t" style="left:567.50px;top:654.12px;line-height:31.5px;z-index:5;font-family:'Liberation Sans', sans-serif;font-size:31.5px;font-weight:400;color:#333;letter-spacing:-0.480px;-webkit-text-stroke:0.8px #333;">Contract Details</div>
<div class="t" style="left:767.50px;top:748.60px;line-height:28px;z-index:5;font-family:'Liberation Sans', sans-serif;font-size:28px;font-weight:400;color:#333;letter-spacing:-1.164px;-webkit-text-stroke:0.2px #333;">Service Plan</div>
<div class="t" style="left:711.10px;top:833.80px;line-height:28px;z-index:5;font-family:'Liberation Sans', sans-serif;font-size:28px;font-weight:400;color:#333;letter-spacing:-0.957px;-webkit-text-stroke:0.2px #333;">Contract Number</div>
<div class="t" style="left:735.90px;top:920.00px;line-height:28px;z-index:5;font-family:'Liberation Sans', sans-serif;font-size:28px;font-weight:400;color:#333;letter-spacing:-1.100px;-webkit-text-stroke:0.2px #333;">Contract Name</div>
<div class="t" style="left:776.70px;top:1006.20px;line-height:28px;z-index:5;font-family:'Liberation Sans', sans-serif;font-size:28px;font-weight:400;color:#333;letter-spacing:-0.500px;-webkit-text-stroke:0.2px #333;">Description</div>
<div class="t" style="left:793.90px;top:1228.80px;line-height:28px;z-index:5;font-family:'Liberation Sans', sans-serif;font-size:28px;font-weight:400;color:#333;letter-spacing:-0.911px;-webkit-text-stroke:0.2px #333;">Start Date</div>
<div class="t" style="left:778.10px;top:1314.70px;line-height:28px;z-index:5;font-family:'Liberation Sans', sans-serif;font-size:28px;font-weight:400;color:#333;letter-spacing:-1.140px;-webkit-text-stroke:0.2px #333;">Expiry Date</div>
<div class="t" style="left:990.50px;top:745.60px;line-height:28px;z-index:5;font-family:'Liberation Sans', sans-serif;font-size:28px;font-weight:400;color:#333;letter-spacing:-0.612px;-webkit-text-stroke:0.2px #333;">-- Select Service Plan --</div>
<div class="t" style="left:1018.00px;top:1398.80px;line-height:28px;z-index:5;font-family:'Liberation Sans', sans-serif;font-size:28px;font-weight:400;color:#333;letter-spacing:-0.914px;-webkit-text-stroke:0.2px #333;">Set as Default Contract</div>
<div class="t" style="left:1313.60px;top:1396.00px;line-height:28px;z-index:5;font-family:'Liberation Sans', sans-serif;font-size:28px;font-weight:400;color:#8a8a8a;letter-spacing:-0.944px;-webkit-text-stroke:0.1px #8a8a8a;">[ Default Contract : GP1 ]</div>
<div class="t" style="left:567.00px;top:1481.92px;line-height:31.5px;z-index:5;font-family:'Liberation Sans', sans-serif;font-size:31.5px;font-weight:400;color:#333;letter-spacing:-0.351px;-webkit-text-stroke:0.8px #333;">Contract Expiry Notification Details</div>
<div class="t" style="left:1677.40px;top:1582.55px;line-height:27px;z-index:5;font-family:'Liberation Sans', sans-serif;font-size:27px;font-weight:400;color:#fff;letter-spacing:-1.667px;-webkit-text-stroke:0.6px #fff;">Save</div>
<div class="t" style="left:1813.20px;top:1582.55px;line-height:27px;z-index:5;font-family:'Liberation Sans', sans-serif;font-size:27px;font-weight:400;color:#333;letter-spacing:-0.600px;-webkit-text-stroke:0.2px #333;">Cancel</div>
<script>(function(){var w=window.innerWidth;if(w&&Math.abs(w-2880)>2){document.body.style.zoom=w/2880;}})();</script>
</body></html>
